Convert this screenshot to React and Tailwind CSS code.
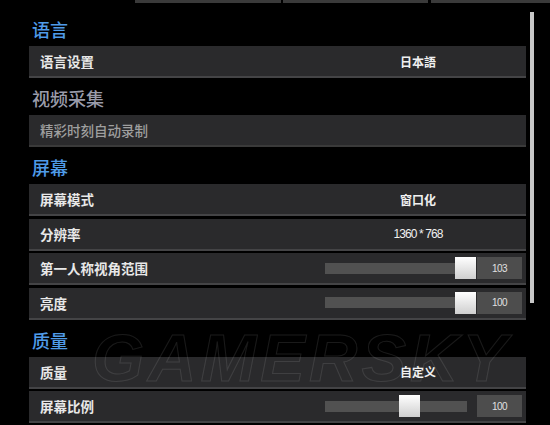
const cjk = { fontFamily: '"Noto Sans CJK SC", sans-serif' };

function Heading({ children, muted }) {
  return (
    <div className={`h-[37px] pl-[3px] pb-[5px] flex items-end text-[18px] leading-[24px] font-medium ${muted ? "text-[#9a9cab]" : "text-[#4f9be8]"}`}>
      {children}
    </div>
  );
}

function Row({ label, value, muted, children, num }) {
  return (
    <div className={`h-[32px] flex items-center pl-[11px] bg-[#2a2a2c] border-b-2 ${muted ? "border-[#3a3a3a]" : "border-[#444446]"}`}>
      <span className={`w-[285px] shrink-0 text-[13.5px] pt-[1px] ${muted ? "text-[#9f9f9f] font-medium" : "text-[#e8e8e8] font-bold"}`}>{label}</span>
      {value && (
        <span
          className={`w-[186px] text-center pt-[1px] text-[12px] text-[#f0f0f0] ${num ? "font-normal tracking-[-0.9px]" : "font-bold"}`}
          style={num ? { fontFamily: '"Liberation Sans", sans-serif' } : undefined}
        >
          {value}
        </span>
      )}
      {children}
    </div>
  );
}

function Slider({ value, percent }) {
  return (
    <div className="flex items-center">
      <div className="relative w-[142px] h-[11px] bg-[#515151]">
        <div className="absolute top-[-5.5px] w-[21px] h-[22px] bg-gradient-to-b from-[#ffffff] to-[#cfcfcf]" style={{ left: `${percent}%` }} />
      </div>
      <div className="ml-[10px] w-[45px] h-[22px] bg-[#4d4d4d] flex items-center justify-center text-[10px] tracking-[-0.5px] text-[#e0e0e0]" style={{ fontFamily: '"Liberation Sans", sans-serif' }}>
        {value}
      </div>
    </div>
  );
}

export default function App() {
  return (
    <div className="w-[550px] h-[425px] overflow-hidden bg-black relative" style={cjk}>
      <div className="flex h-[3px] pl-[135px]">
        <div className="w-[146px] bg-[#3a3a3a]" />
        <div className="ml-[2px] w-[145px] bg-[#3a3a3a]" />
        <div className="ml-[3px] flex-1 bg-[#3a3a3a]" />
      </div>
      <div className="flex pl-[29px] pt-[6px]">
        <div className="w-[497px] flex flex-col">
          <Heading>语言</Heading>
          <Row label="语言设置" value="日本語" />
          <Heading muted>视频采集</Heading>
          <Row label="精彩时刻自动录制" muted />
          <Heading>屏幕</Heading>
          <div className="flex flex-col gap-[2.5px]">
            <Row label="屏幕模式" value="窗口化" />
            <Row label="分辨率" value="1360 * 768" num />
            <Row label="第一人称视角范围"><Slider value="103" percent={91.5} /></Row>
            <Row label="亮度"><Slider value="100" percent={91.5} /></Row>
          </div>
          <Heading>质量</Heading>
          <div className="flex flex-col gap-[2.5px]">
            <Row label="质量" value="自定义" />
            <Row label="屏幕比例"><Slider value="100" percent={52} /></Row>
          </div>
        </div>
        <div className="ml-[4px] mt-[3px] w-[4px] h-[291px] bg-[#c8c8c8]" />
      </div>
      <div className="absolute left-[92px] top-[324px] text-[67px] leading-[67px] font-black italic tracking-[4px] text-transparent [-webkit-text-stroke:1px_rgba(255,255,255,0.1)] pointer-events-none" style={{ fontFamily: '"Liberation Sans", sans-serif' }}>
        GAMERSKY
      </div>
    </div>
  );
}
